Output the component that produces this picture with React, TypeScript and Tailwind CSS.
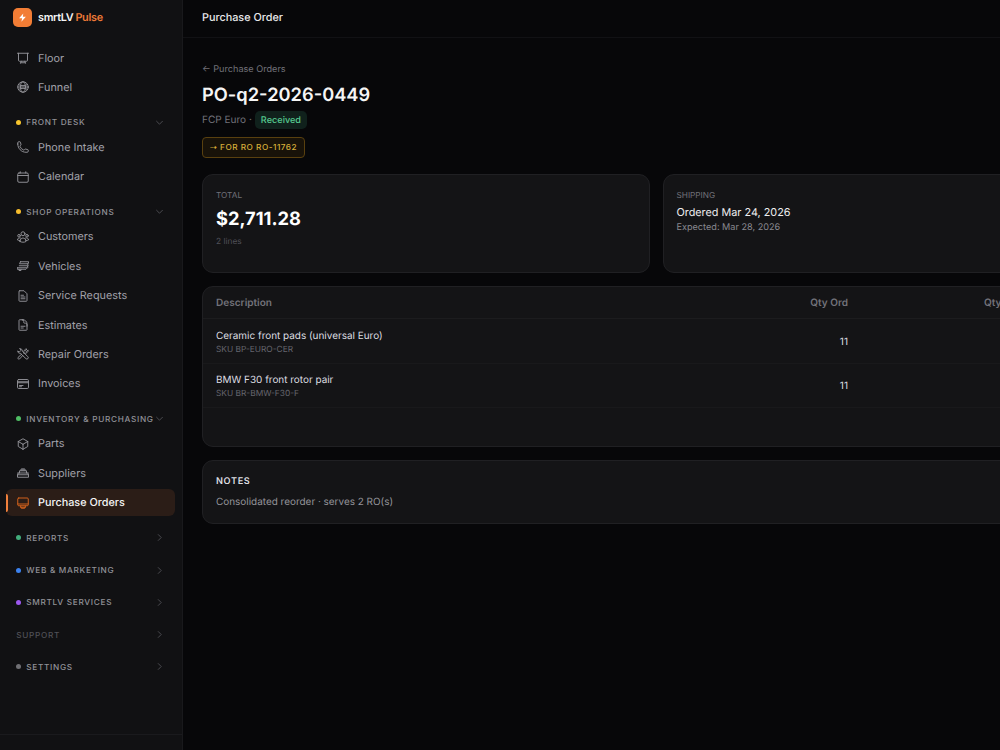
import { ReactNode } from 'react';

const icons: Record<string, ReactNode> = {
  floor: <path d="M1 2.500h22M3 2.500v14a2 2 0 0 0 2 2h14a2 2 0 0 0 2-2V2.500M8.500 18.500l-1.500 4M15.500 18.500l1.500 4M7.500 21.500h9" />,
  funnel: <><circle cx="12" cy="12" r="10.500" /><ellipse cx="12" cy="12" rx="5" ry="10.500" /><path d="M3.500 7.500c5 2.500 12 2.500 17 0M3.500 16.500c5-2.500 12-2.500 17 0M1.500 12h21" /></>,
  phone: <path d="M1.500 6c0 9.100 7.400 16.500 16.500 16.500h2.250a2.250 2.250 0 0 0 2.250-2.250v-1.900c0-.516-.351-.966-.852-1.091l-4.723-1.206c-.44-.11-.902.055-1.173.417l-1.070 1.393c-.282.376-.769.542-1.210.380a12.700 12.700 0 0 1-7.643-7.643c-.162-.441.004-.928.380-1.210l1.393-1.070c.363-.271.527-.734.417-1.173L6.813 2.352a1.125 1.125 0 0 0-1.091-.852H3.750A2.250 2.250 0 0 0 1.500 3.750V6Z" />,
  calendar: <><rect x="1.500" y="4" width="21" height="18.500" rx="2.500" /><path d="M6.500 1.500V4M17.500 1.500V4M1.500 9h21" /></>,
  customers: <><circle cx="12" cy="5.500" r="4" /><circle cx="4" cy="9.500" r="2.600" /><circle cx="20" cy="9.500" r="2.600" /><path d="M6 21c0-4 2.500-7 6-7s6 3 6 7c-3.500 2-8.500 2-12 0ZM6 19c-2 0-3.500-.2-5-1 0-3 2.500-5 6-4M18 19c2 0 3.500-.2 5-1 0-3-2.500-5-6-4" /></>,
  vehicles: <path d="M7 3.500h16.500l-1.500 4H5l2-4ZM22 7.500l-1 4H4.500M.5 15.500h18l4-4M.5 15.500V18.500h17.500l4.500-4.500M4 18.500V21h4v-2.500" />,
  service: <path d="M20 14.250v-2.625a3.375 3.375 0 0 0-3.375-3.375h-2A1.125 1.125 0 0 1 13.500 7.125v-2.250a3.375 3.375 0 0 0-3.375-3.375M8 14.500h8M8 18h4.500M12 1.500H5.125c-.621 0-1.125.504-1.125 1.125v18.750c0 .621.504 1.125 1.125 1.125h13.750c.621 0 1.125-.504 1.125-1.125V9.500a8 8 0 0 0-8-8Z" />,
  request: <path d="M5.500 1.500h8.500l6 6v13.500a1.500 1.500 0 0 1-1.500 1.500h-13A1.500 1.500 0 0 1 4 21V3a1.500 1.500 0 0 1 1.500-1.500ZM8 10.500h5M8 14h8M8 17.500h8" />,
  repair: <path d="m9 12.500-7 6.500a2.200 2.200 0 0 0 3 3l6.500-7M13.500 10c-1-4 2-8.500 6.500-8l-3 3.300c.3 1 1 1.500 2 1.800l3.300-3c.5 4.500-4 7.500-8.300 6.500M6 1.500c2.800-.3 5.200 2 4.700 4.800l11 11.200a2.600 2.600 0 0 1-3.800 3.800L6.500 10.500C3.500 11 1 8.500 1.500 5.800l3 2.400L8 4.500 6 1.500Z" />,
  invoices: <><rect x="1" y="3" width="22" height="18" rx="2.500" /><path d="M1 7.500h22M1 9.500h22M5 15h7M5 17.500h4" /></>,
  parts: <path d="m21.500 7-9.500-5.500L2.500 7m19 0L12 12.500M21.500 7v10L12 22.500M2.500 7l9.500 5.500M2.500 7v10l9.500 5.500m0-10v10" />,
  suppliers: <path d="M2 12h20M2 12v2l-1 2v4.500h22V16l-1-2v-2M1 15.500h22M5 12V7.500h14V12M8 7.500V4h8v3.500M12 4v3.500" />,
  orders: <path d="M3.500 2h17a2 2 0 0 1 2 2v11.500a2 2 0 0 1-2 2h-17a2 2 0 0 1-2-2V4a2 2 0 0 1 2-2ZM1.500 14h21M7 18l1.500 4.500h7L17 18M7.500 20.500h9" />,
};

function Icon({ name }: { name: string }) {
  return (
    <svg className="h-3 w-3 shrink-0" viewBox="0 0 24 24" fill="none" stroke="currentColor" strokeWidth="1.900" strokeLinecap="round" strokeLinejoin="round">
      {icons[name]}
    </svg>
  );
}

function Item({ icon, label, active }: { icon: string; label: string; active?: boolean }) {
  return (
    <div className={`relative mb-[2px] flex h-[27.400px] items-center gap-[9px] rounded-[6px] pl-[11px] text-[10.830px] ${active ? 'bg-[#2b1d17] font-medium text-[#f5f5f5]' : 'text-[#a1a1aa]'}`}>
      {active && <span className="absolute top-[5px] left-0 h-[18px] w-[2px] rounded-r bg-[#f0803c]" />}
      <span className={active ? 'text-[#d9641c]' : 'text-[#929298]'}><Icon name={icon} /></span>
      <span className="pt-[1.300px]">{label}</span>
    </div>
  );
}

function Section({ label, dot, open }: { label: string; dot?: string; open?: boolean }) {
  return (
    <div className={`flex h-[18px] items-center pr-[11px] pl-[10.300px] text-[8.230px] font-medium tracking-[0.700px] whitespace-nowrap ${dot ? 'text-[#919198]' : 'text-[#505056]'}`}>
      {dot && <span className={`mr-[5px] h-[5px] w-[5px] shrink-0 rounded-full ${dot}`} />}
      <span className="pt-[0.500px]">{label}</span>
      <svg className="ml-auto h-[9px] w-[9px] shrink-0 text-[#505056]" viewBox="0 0 9 9" fill="none" stroke="currentColor" strokeWidth="0.9">
        <path d={open ? 'M1.300 3 4.500 6.200 7.700 3' : 'M3 1.300 6.200 4.500 3 7.700'} />
      </svg>
    </div>
  );
}

function Line({ name, sku }: { name: string; sku: string }) {
  return (
    <div className="flex h-[44.600px] items-center border-b border-[#19191b] px-[13px] pt-[3px]">
      <div className="w-[460px]">
        <div className="text-[9.950px] leading-[15px] text-[#dedee1]">{name}</div>
        <div className="text-[8.350px] leading-[12px] text-[#66666e]">{sku}</div>
      </div>
      <div className="w-[172px] text-right text-[10.050px] text-[#dedee1]">11</div>
    </div>
  );
}

export default function App() {
  return (
    <div className="flex h-[750px] w-[1000px] overflow-hidden bg-[#070709] font-['Inter',sans-serif] text-[#f5f5f5] antialiased [text-rendering:geometricPrecision]">
      <aside className="flex w-[183px] shrink-0 flex-col border-r border-[#19191c] bg-[#111113]">
        <div className="flex h-[44.300px] items-start gap-[6px] pt-2 pl-[13px]">
          <span className="flex h-[19px] w-[19px] items-center justify-center rounded-[5px] bg-[#f27d35]">
            <svg className="h-[9px] w-[9px]" viewBox="0 0 24 24" fill="white"><path d="M14 1 3 14h8l-2 9 12-13h-8l1-9Z" /></svg>
          </span>
          <span className="flex gap-[2px] text-[10.830px] leading-[20px] font-semibold tracking-[-0.300px]">smrtLV<span className="text-[#ed7937]">Pulse</span></span>
        </div>
        <nav className="flex-1 pr-[7px] pl-[6px]">
          <Item icon="floor" label="Floor" />
          <Item icon="funnel" label="Funnel" />
          <div className="pt-[10px]"><Section label="FRONT DESK" dot="bg-[#f7c52d]" open /></div>
          <div className="pt-[2.700px]"><Item icon="phone" label="Phone Intake" /><Item icon="calendar" label="Calendar" /></div>
          <div className="pt-[10px]"><Section label="SHOP OPERATIONS" dot="bg-[#f7bd2d]" open /></div>
          <div className="pt-[2.700px]">
            <Item icon="customers" label="Customers" />
            <Item icon="vehicles" label="Vehicles" />
            <Item icon="request" label="Service Requests" />
            <Item icon="service" label="Estimates" />
            <Item icon="repair" label="Repair Orders" />
            <Item icon="invoices" label="Invoices" />
          </div>
          <div className="pt-[10px]"><Section label="INVENTORY & PURCHASING" dot="bg-[#4fbe64]" open /></div>
          <div className="pt-[2.700px]">
            <Item icon="parts" label="Parts" />
            <Item icon="suppliers" label="Suppliers" />
            <Item icon="orders" label="Purchase Orders" active />
          </div>
          <div className="flex flex-col gap-[14.300px] pt-[10.300px]">
            <Section label="REPORTS" dot="bg-[#42ad7c]" />
            <Section label="WEB & MARKETING" dot="bg-[#3c82ef]" />
            <Section label="SMRTLV SERVICES" dot="bg-[#9d58ef]" />
            <Section label="SUPPORT" />
            <Section label="SETTINGS" dot="bg-[#707074]" />
          </div>
        </nav>
        <div className="h-4 border-t border-[#1a1a1d]" />
      </aside>

      <main className="flex min-w-0 flex-1 flex-col">
        <header className="h-[38px] shrink-0 border-b border-[#111114] pt-[9px] pl-[19px] text-[10.830px] leading-[17px] font-medium text-[#e9e9eb]">Purchase Order</header>
        <div className="w-[927px] pl-[19px]">
          <div className="mt-[25px] text-[9.140px] leading-[14px] text-[#72727a]">← Purchase Orders</div>
          <h1 className="mt-[5px] text-[18.280px] leading-[26px] font-semibold">PO-q2-2026-0449</h1>
          <div className="mt-[3px] flex h-[18px] items-center gap-[3px] text-[10.050px] text-[#72727a]">
            <span className="pt-px">FCP Euro ·</span>
            <span className="rounded-[5px] bg-[#10211c] px-[6px] text-[9.140px] leading-[18px] font-medium text-[#56c98f]"><span className="relative top-px">Received</span></span>
          </div>
          <div className="mt-[8px] inline-flex h-[21px] items-center rounded-[4px] border border-[#59400f] bg-[#181209] px-[7px] text-[8.230px] font-medium tracking-[0.500px] text-[#d7ae39]">⇢ FOR RO RO-11762</div>
          <div className="mt-[16px] grid grid-cols-2 gap-[13px]">
            <div className="h-[99px] rounded-[11px] border border-[#202023] bg-[#141416] px-[13px] pt-[13.500px]">
              <div className="text-[8.230px] leading-[13px] text-[#707078]">TOTAL</div>
              <div className="mt-[3px] text-[18.280px] leading-[28px] font-bold text-white">$2,711.28</div>
              <div className="mt-[3px] text-[8.350px] leading-[13px] text-[#505057]">2 lines</div>
            </div>
            <div className="h-[99px] rounded-[11px] border border-[#202023] bg-[#141416] px-[13px] pt-[13.500px]">
              <div className="text-[8.230px] leading-[13px] text-[#707078]">SHIPPING</div>
              <div className="mt-[3px] text-[10.830px] leading-[16px] text-[#eeeeef]">Ordered Mar 24, 2026</div>
              <div className="text-[9.140px] leading-[14px] text-[#88888f]">Expected: Mar 28, 2026</div>
            </div>
          </div>
          <div className="mt-[13px] h-[161px] rounded-[11px] border border-[#202023] bg-[#141416]">
            <div className="flex h-[32px] items-center border-b border-[#1c1c1e] px-[13px] pt-[1.500px] text-[10.050px] font-semibold text-[#72727a]">
              <div className="w-[460px]">Description</div>
              <div className="w-[172px] text-right">Qty Ord</div>
              <div className="w-[180px] text-right">Qty Rcvd</div>
            </div>
            <Line name="Ceramic front pads (universal Euro)" sku="SKU BP-EURO-CER" />
            <Line name="BMW F30 front rotor pair" sku="SKU BR-BMW-F30-F" />
          </div>
          <div className="mt-[13px] h-[64px] rounded-[11px] border border-[#202023] bg-[#141416] px-[13px] pt-[13px]">
            <div className="text-[9.140px] leading-[15px] font-semibold tracking-[0.650px] text-[#dedee1]">NOTES</div>
            <div className="mt-[6px] text-[9.950px] leading-[15px] text-[#94949b]">Consolidated reorder · serves 2 RO(s)</div>
          </div>
        </div>
      </main>
    </div>
  );
}
